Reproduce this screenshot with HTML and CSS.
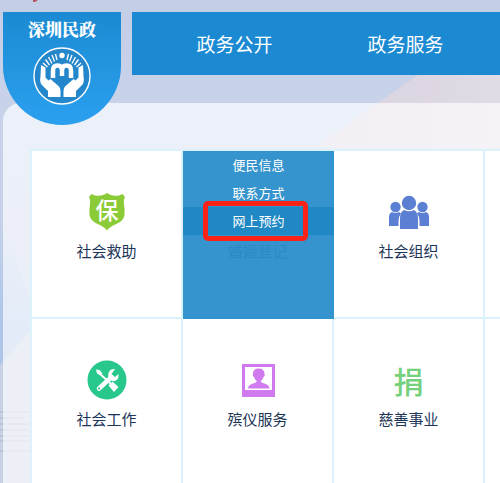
FILE: index.html
```
<!DOCTYPE html>
<html lang="zh-CN">
<head>
  <meta charset="UTF-8">
  <meta name="viewport" content="width=device-width, initial-scale=1">
  <title>深圳民政</title>
  <link rel="stylesheet" href="styles.css">
</head>
<body>

  <svg class="scenery" viewBox="0 0 500 483" preserveAspectRatio="xMinYMin slice" aria-hidden="true">
    <defs>
      <linearGradient id="dusk" x1="0" y1="0" x2="1" y2="0">
        <stop offset="0" stop-color="#d9d1e0"/>
        <stop offset="1" stop-color="#e0dbe5"/>
      </linearGradient>
      <linearGradient id="lake" x1="0" y1="0" x2="0" y2="1">
        <stop offset="0" stop-color="#a3c2ea" stop-opacity="0"/>
        <stop offset="0.4" stop-color="#a3c2ea"/>
        <stop offset="1" stop-color="#b3c3e3"/>
      </linearGradient>
    </defs>
    <path d="M500 50H455L418 75 318 145 500 170z" fill="url(#dusk)"/>
    <path d="M0 220 31 300V483H0z" fill="url(#lake)" opacity="0.7"/>
    <path d="M0 365 31 330V483H0z" fill="#c8d0e4"/>
    <path d="M0 412H31M0 418H24M0 424H31M0 430H28M0 436H31M0 441H30M0 451H31" stroke="#b3bfd2" stroke-width="1.500"/>
    <path d="M33 0h5l-3 2h-2z" fill="#b5545f"/>
  </svg>

  <header class="header">
    <a class="logo" href="#">
      <span class="logo-name">深圳民政</span>
      <svg class="logo-mark" viewBox="0 0 58 58" aria-hidden="true">
        <circle cx="29" cy="29" r="28" fill="#2487cb" stroke="#fff" stroke-width="1.400"/>
        <circle cx="29" cy="8.500" r="2.700" fill="#fff"/>
        <path d="M10 16l4.500 4M12.500 12.500l4 5.500M15.500 10l3.500 6.500M19 8l2.500 6.500M22.500 7l1.500 6M48 16l-4.500 4M45.500 12.500l-4 5.500M42.500 10l-3.500 6.500M39 8l-2.500 6.500M35.500 7l-1.500 6" stroke="#fff" stroke-width="1.300"/>
        <path d="M20 31V23.500q0-5 4.500-5t4.500 5V29M29 29V23.500q0-5 4.500-5t4.500 5V31" fill="none" stroke="#fff" stroke-width="4.500"/>
        <path d="M8 18l4.500 2.500v10l3 3 2-1.500 8.500 7.500q1.500 1.500 1.500 4.500V50H15v-6l-6.500-6.500q-2-3-1-8z" fill="#fff"/>
        <path d="M50 18l-4.500 2.500v10l-3 3-2-1.500-8.500 7.500q-1.500 1.500-1.500 4.500V50H43v-6l6.500-6.500q2-3 1-8z" fill="#fff"/>
      </svg>
    </a>
    <nav class="nav">
      <a href="#">政务公开</a>
      <a href="#">政务服务</a>
    </nav>
  </header>

  <main class="panel">
    <div class="services">
      <div class="card">
        <a class="card-link" href="#">
          <svg class="icon" viewBox="0 0 40 40" aria-hidden="true">
            <path d="M4.500 2 8 3.500q3 .5 6 0 4-1 6-2.500 2 1.500 6 2.500 3 .5 6 0L35.500 2 38 5q-2 3-1 7 1 5 .5 11-1 6-8 9Q23 34.500 20 38.500q-3-4-9.500-6.500-7-3-8-9-.5-6 .5-11 1-4-1-7z" fill="#8ccb38"/>
            <text class="shield-text" x="20" y="27" text-anchor="middle">保</text>
          </svg>
          <span>社会救助</span>
        </a>
      </div>

      <div class="card">
        <a class="card-link" href="#">
          <span class="icon"></span>
          <span>婚姻登记</span>
        </a>
        <div class="menu">
          <a href="#">便民信息</a>
          <a href="#">联系方式</a>
          <a class="active" href="#">网上预约</a>
        </div>
      </div>

      <div class="card">
        <a class="card-link" href="#">
          <svg class="icon" viewBox="0 0 40 40" fill="#5b7fd2" aria-hidden="true">
            <circle cx="6.500" cy="15" r="5.200"/>
            <circle cx="33.500" cy="15" r="5.200"/>
            <path d="M0 34V25q0-4 3-5 3.500 2 7 0 1.500.5 2 1.500-2.500 3-2.500 7.500v5z"/>
            <path d="M40 34V25q0-4-3-5-3.500 2-7 0-1.500.5-2 1.500 2.500 3 2.500 7.500v5z"/>
            <circle cx="20" cy="11" r="7.200"/>
            <path d="M11 37V27q0-7 4-9 5 2.500 10 0 4 2 4 9v10z"/>
          </svg>
          <span>社会组织</span>
        </a>
      </div>

      <div class="card"></div>

      <div class="card">
        <a class="card-link" href="#">
          <svg class="icon" viewBox="0 0 40 40" aria-hidden="true">
            <circle cx="20" cy="20" r="19.500" fill="#28c78c"/>
            <path d="M11 12 25 25" stroke="#fff" stroke-width="2"/>
            <path d="M9 9.500l3.500.5 3 3.500-2 2-3.500-2z" fill="#fff"/>
            <path d="M21.500 25.500 25.500 21.500l6 5.500-4.500 5z" fill="#fff"/>
            <path d="M12 28.500 24 17.500" stroke="#fff" stroke-width="4.500" stroke-linecap="round"/>
            <path d="M28 9q-5-.5-6.500 4-1 4 1.500 6.500t6 1q3-1.500 2.500-6.500l-3.500 3-3.500-3z" fill="#fff"/>
            <circle cx="12" cy="28.500" r="1.100" fill="#28c78c"/>
          </svg>
          <span>社会工作</span>
        </a>
      </div>

      <div class="card">
        <a class="card-link" href="#">
          <svg class="icon" viewBox="0 0 40 40" aria-hidden="true">
            <path d="M4 4h33v33H4zM7 7v23h27V7z" fill="#d07af0" fill-rule="evenodd"/>
            <path d="M20.500 8.500q6 0 6 5.500 1 2-1 3-1 3-3 4 1 2 4 2.500 5 1.500 5 5H10q0-3.500 5-5 3-.5 4-2.500-2-1-3-4-2-1-1-3 0-5.500 5.500-5.500z" fill="#d07af0"/>
          </svg>
          <span>殡仪服务</span>
        </a>
      </div>

      <div class="card">
        <a class="card-link" href="#">
          <span class="icon icon-donate">捐</span>
          <span>慈善事业</span>
        </a>
      </div>

      <div class="card"></div>
    </div>
  </main>

</body>
</html>
```
FILE: styles.css
```
* {
  box-sizing: border-box;
}
body {
  margin: 0;
  padding: 12px 0 0 3px;
  min-height: 100vh;
  overflow: hidden;
  background: linear-gradient(180deg, #c4cde6 0, #c8d3ea 110px, #c6d0e8 260px, #b4c7e7 100%);
  font-family: "Noto Sans CJK SC", "Noto Sans", sans-serif;
}
a {
  color: inherit;
  text-decoration: none;
}
.scenery {
  position: absolute;
  top: 0;
  left: 0;
  width: 100%;
  height: 100%;
  z-index: -1;
}
.header {
  display: flex;
  align-items: flex-start;
  gap: 11px;
  height: 91px;
}
.logo {
  display: flex;
  flex: none;
  flex-direction: column;
  align-items: center;
  gap: 8px;
  width: 118px;
  height: 113px;
  padding-top: 7px;
  border-radius: 0 0 59px 59px;
  background: linear-gradient(180deg, #1b8ad2, #2ba0ef);
  color: #fff;
  z-index: 1;
}
.logo-name {
  font-family: "Noto Serif CJK SC", "Noto Sans CJK SC", serif;
  font-size: 17px;
  font-weight: 900;
  line-height: 20px;
}
.logo-mark {
  width: 58px;
  height: 58px;
}
.nav {
  display: flex;
  flex: 1;
  padding-left: 17px;
  background: #1b8ad2;
}
.nav a {
  width: 171px;
  color: #fff;
  font-size: 19px;
  line-height: 63px;
  text-align: center;
}
.panel {
  padding: 46px 0 0 27px;
  border-radius: 18px 0 0 0;
  background: rgba(255, 255, 255, 0.66);
}
.services {
  display: grid;
  grid-template-columns: repeat(3, 149px) 1fr;
  grid-auto-rows: 166px;
  gap: 2px;
  padding: 2px 0 2px 2px;
  background: #dbf1fc;
}
.card {
  position: relative;
  background: #fff;
}
.card-link {
  display: flex;
  flex-direction: column;
  align-items: center;
  gap: 9px;
  padding-top: 41px;
  color: #1c3557;
  font-size: 15px;
  line-height: 20px;
}
.icon {
  width: 40px;
  height: 40px;
}
.shield-text {
  fill: #fff;
  font-size: 23px;
  font-weight: 500;
}
.icon-donate {
  color: #74d07a;
  font-size: 30px;
  font-weight: 500;
  line-height: 40px;
  text-align: center;
}
.menu {
  position: absolute;
  top: 0;
  right: -2px;
  bottom: -2px;
  left: 0;
  background: rgba(42, 142, 202, 0.95);
  color: #fff;
  font-size: 13px;
  line-height: 28px;
  text-align: center;
}
.menu a {
  display: block;
}
.menu .active {
  position: relative;
  background: #2088c4;
}
.menu .active::after {
  content: "";
  position: absolute;
  top: -6px;
  right: 26px;
  bottom: -6px;
  left: 20px;
  border: 5px solid #fb2217;
  border-radius: 5px;
}
```
